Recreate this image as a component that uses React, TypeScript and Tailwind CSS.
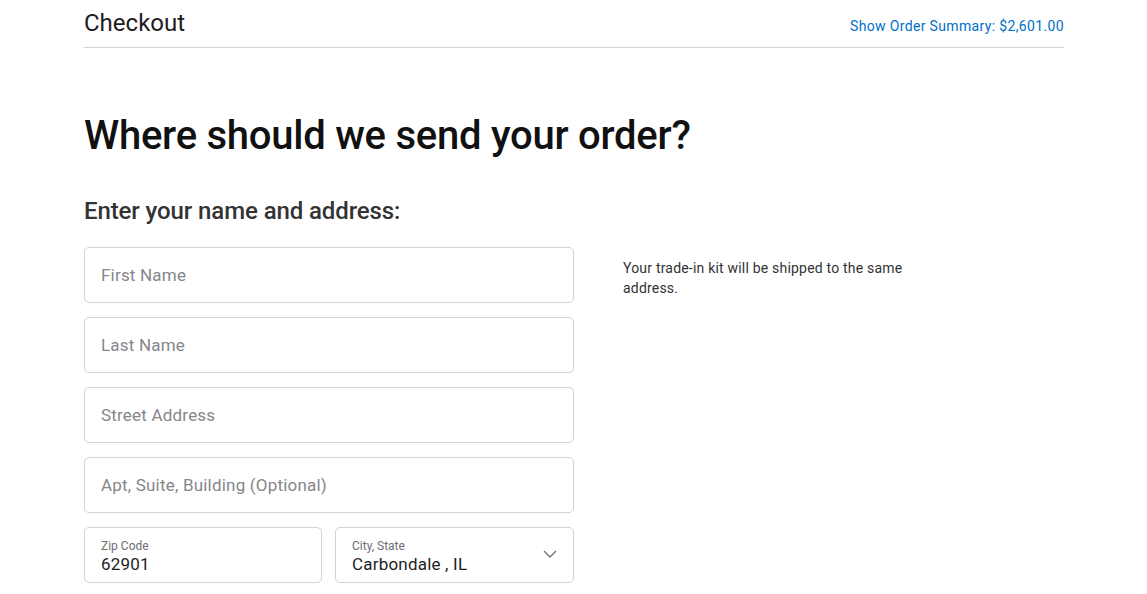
import React from "react";

const fields = ["First Name", "Last Name", "Street Address", "Apt, Suite, Building (Optional)"];

export default function App() {
  return (
    <div className="min-h-screen bg-white font-['Roboto',sans-serif] text-[#1d1d1f]">
      <div className="ml-[84px] w-[980px]">
        <header className="flex items-end justify-between border-b border-[#d2d2d7] pt-[7px] pb-[8px]">
          <h1 className="text-[24px] leading-[32px] text-[#1d1d1f]">Checkout</h1>
          <a className="text-[14px] leading-[20px] tracking-[0.35px] text-[#0070c9] pb-[3px]">Show Order Summary: $2,601.00</a>
        </header>

        <h2 className="mt-[64px] text-[40px] leading-[48px] font-medium tracking-[-0.25px] text-[#111]">
          Where should we send your order?
        </h2>

        <h3 className="mt-[35px] text-[24px] leading-[32px] font-medium tracking-[-0.1px] text-[#333]">
          Enter your name and address:
        </h3>

        <div className="mt-[20px] flex">
          <div className="flex w-[490px] flex-col gap-[14px]">
            {fields.map((f) => (
              <div
                key={f}
                className="flex h-[56px] items-center rounded-[5px] border border-[#d2d2d7] px-[16px] pt-[2px] text-[17px] tracking-[0.2px] text-[#86868b]"
              >
                {f}
              </div>
            ))}
            <div className="flex gap-[13px]">
              <div className="flex h-[56px] w-[238px] flex-col justify-center rounded-[5px] border border-[#d2d2d7] px-[16px] pt-[3px]">
                <span className="text-[12px] leading-[14px] text-[#6e6e73]">Zip Code</span>
                <span className="text-[17px] leading-[22px] tracking-[0.2px] text-[#1d1d1f]">62901</span>
              </div>
              <div className="flex h-[56px] flex-1 items-center justify-between rounded-[5px] border border-[#d2d2d7] pl-[16px] pr-[16px]">
                <div className="flex flex-col pt-[3px]">
                  <span className="text-[12px] leading-[14px] text-[#6e6e73]">City, State</span>
                  <span className="text-[17px] leading-[22px] tracking-[0.2px] text-[#1d1d1f]">Carbondale , IL</span>
                </div>
                <svg width="14" height="8" viewBox="0 0 14 8" className="mb-[2px]">
                  <path d="M1 1l6 6 6-6" fill="none" stroke="#6e6e73" strokeWidth="1.3" />
                </svg>
              </div>
            </div>
          </div>
          <p className="ml-[49px] mt-[11px] w-[310px] text-[14px] leading-[20px] tracking-[0.2px] text-[#333]">
            Your trade-in kit will be shipped to the same address.
          </p>
        </div>
      </div>
    </div>
  );
}
